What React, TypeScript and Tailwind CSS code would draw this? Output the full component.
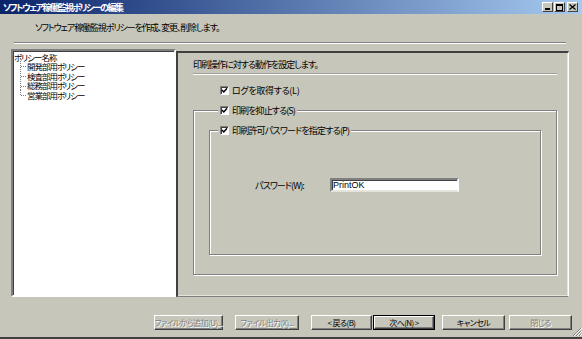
import React from "react";

function CheckBox() {
  return (
    <span className="inline-flex h-[9px] w-[9px] shrink-0 items-center justify-center border border-t-[#808080] border-l-[#808080] border-r-white border-b-white bg-white shadow-[inset_1px_1px_0_#404040]">
      <svg width="7" height="7" viewBox="0 0 7 7">
        <path d="M1 3 L2.8 5 L6 1.2" stroke="#000" strokeWidth="1.4" fill="none" />
      </svg>
    </span>
  );
}

function Btn({
  label,
  w,
  disabled,
  isDefault,
  className = "",
}: {
  label: string;
  w: string;
  disabled?: boolean;
  isDefault?: boolean;
  className?: string;
}) {
  const inner = (
    <div
      className={`flex h-full w-full items-center justify-center whitespace-nowrap border border-t-white border-l-white border-r-[#404040] border-b-[#404040] shadow-[inset_-1px_-1px_0_#808080] ${
        disabled ? "text-[#808080] [text-shadow:1px_1px_0_#fff]" : "text-black"
      }`}
    >
      {label}
    </div>
  );
  if (isDefault) {
    return <div className={`h-[15px] border border-black ${w} ${className}`}>{inner}</div>;
  }
  return <div className={`h-[15px] ${w} ${className}`}>{inner}</div>;
}

function TreeRow({ label, last }: { label: string; last?: boolean }) {
  return (
    <div className="flex h-[9.6px] items-center">
      <svg width="13" height="10" viewBox="0 0 13 10" className="shrink-0">
        <line x1="6.5" y1="0" x2="6.5" y2={last ? 5 : 10} stroke="#808080" strokeDasharray="1 1" />
        <line x1="7" y1="5.5" x2="13" y2="5.5" stroke="#808080" strokeDasharray="1 1" />
      </svg>
      <span className="tracking-[-1px]">{label}</span>
    </div>
  );
}

export default function App() {
  const policies = ["開発部用ポリシー", "検査部用ポリシー", "総務部用ポリシー", "営業部用ポリシー"];

  return (
    <div className="relative h-[339px] w-[582px] overflow-hidden border-b-2 border-b-[#404040] bg-[#c6c6ba] font-['Noto_Sans_CJK_JP',sans-serif] text-[9px] leading-none tracking-[-1px] text-black [font-feature-settings:'palt']">
      {/* Title bar */}
      <div className="flex h-[14px] items-center justify-between bg-[linear-gradient(to_right,#0a246a,#a6caf0)] pl-[3px] pr-[4px]">
        <span className="font-bold tracking-[-1.5px] text-white">ソフトウェア稼働監視ポリシーの編集</span>
        <div className="flex items-center">
          <div className="flex h-[10px] w-[11px] items-end justify-center border border-t-white border-l-white border-r-[#404040] border-b-[#404040] bg-[#c6c6ba] pb-[1px]">
            <div className="h-[2px] w-[5px] bg-black" />
          </div>
          <div className="ml-[1px] flex h-[10px] w-[11px] items-center justify-center border border-t-white border-l-white border-r-[#404040] border-b-[#404040] bg-[#c6c6ba]">
            <div className="h-[7px] w-[7px] border border-t-2 border-black" />
          </div>
          <div className="ml-[2px] flex h-[10px] w-[11px] items-center justify-center border border-t-white border-l-white border-r-[#404040] border-b-[#404040] bg-[#c6c6ba]">
            <svg width="7" height="6" viewBox="0 0 7 6">
              <path d="M0.5 0.5 L6.5 5.5 M6.5 0.5 L0.5 5.5" stroke="#000" strokeWidth="1.3" />
            </svg>
          </div>
        </div>
      </div>

      {/* Description */}
      <div className="mt-[8px] flex h-[10px] items-center pl-[35px] tracking-[-1.1px]">ソフトウェア稼働監視ポリシーを作成、変更、削除します。</div>
      <div className="ml-[14px] mt-[10px] h-[2px] w-[552px] border-t border-t-[#808080] border-b border-b-white" />

      {/* Main */}
      <div className="ml-[11px] mt-[5px] flex h-[248px]">
        {/* Tree */}
        <div className="h-full w-[165px] border-2 border-t-[#808080] border-l-[#808080] border-r-white border-b-white bg-white pl-[1px] pt-[1px] text-[8.5px] shadow-[inset_1px_1px_0_#404040]">
          <div className="flex h-[9.6px] items-center">ポリシー名称</div>
          {policies.map((p, i) => (
            <TreeRow key={p} label={p} last={i === policies.length - 1} />
          ))}
        </div>

        {/* Settings panel */}
        <div className="mt-[2px] h-[246px] w-[393px] border-t-2 border-l-2 border-r border-b border-t-[#404040] border-l-[#404040] border-r-white border-b-[#808080] shadow-[inset_-1px_-1px_0_#e4e4dc]">
          <div className="mt-[6px] flex h-[10px] items-center pl-[15px]">印刷操作に対する動作を設定します。</div>
          <div className="ml-[15px] mt-[4px] h-[2px] w-[364px] border-t border-t-[#a0a098] border-b border-b-white" />

          <div className="ml-[42px] mt-[11px] flex h-[9px] items-center gap-[3px]">
            <CheckBox />
            <span className="tracking-[-0.3px]">ログを取得する(L)</span>
          </div>

          <fieldset className="ml-[15px] mt-[10px] h-[170px] w-[364px] border border-[#808080] shadow-[inset_1px_1px_0_#fff,1px_1px_0_#fff]">
            <legend className="ml-[24px] flex h-[10px] items-center gap-[3px] bg-[#c6c6ba] px-[2px]">
              <CheckBox />
              <span className="tracking-[-0.9px]">印刷を抑止する(S)</span>
            </legend>

            <fieldset className="ml-[15px] mt-[10px] h-[130px] w-[332px] border border-[#808080] shadow-[inset_1px_1px_0_#fff,1px_1px_0_#fff]">
              <legend className="ml-[8px] flex h-[10px] items-center gap-[3px] bg-[#c6c6ba] px-[2px]">
                <CheckBox />
                <span className="tracking-[-0.8px]">印刷許可パスワードを指定する(P)</span>
              </legend>

              <div className="mt-[43px] flex h-[14px] items-center">
                <span className="ml-[45px] w-[75px] tracking-[-0.9px]">パスワード(W):</span>
                <div className="flex h-[14px] w-[129px] items-center border-2 border-t-[#808080] border-l-[#808080] border-r-white border-b-[#e4e4dc] bg-white pl-[1px] font-['Liberation_Sans',sans-serif] tracking-normal shadow-[inset_1px_1px_0_#404040]">
                  PrintOK
                </div>
              </div>
            </fieldset>
          </fieldset>
        </div>
      </div>

      {/* Buttons */}
      <div className="mt-[18px] flex text-[8px] tracking-[-0.6px]">
        <Btn label="ファイルから追加(U)..." w="w-[69px]" disabled className="ml-[154px]" />
        <Btn label="ファイル出力(X)..." w="w-[64px]" disabled className="ml-[12px]" />
        <Btn label="< 戻る(B)" w="w-[61px]" className="ml-[12px]" />
        <Btn label="次へ(N) >" w="w-[62px]" isDefault className="ml-[1px]" />
        <Btn label="キャンセル" w="w-[63px]" className="ml-[7px]" />
        <Btn label="閉じる" w="w-[63px]" disabled className="ml-[4px]" />
      </div>

      {/* Resize grip */}
      <svg className="absolute bottom-0 right-0" width="10" height="10" viewBox="0 0 10 10">
        <path d="M9 1 L1 9 M9 4 L4 9 M9 7 L7 9" stroke="#808080" strokeWidth="1" />
        <path d="M10 1 L2 9 M10 4 L5 9 M10 7 L8 9" stroke="#fff" strokeWidth="1" />
      </svg>
    </div>
  );
}
